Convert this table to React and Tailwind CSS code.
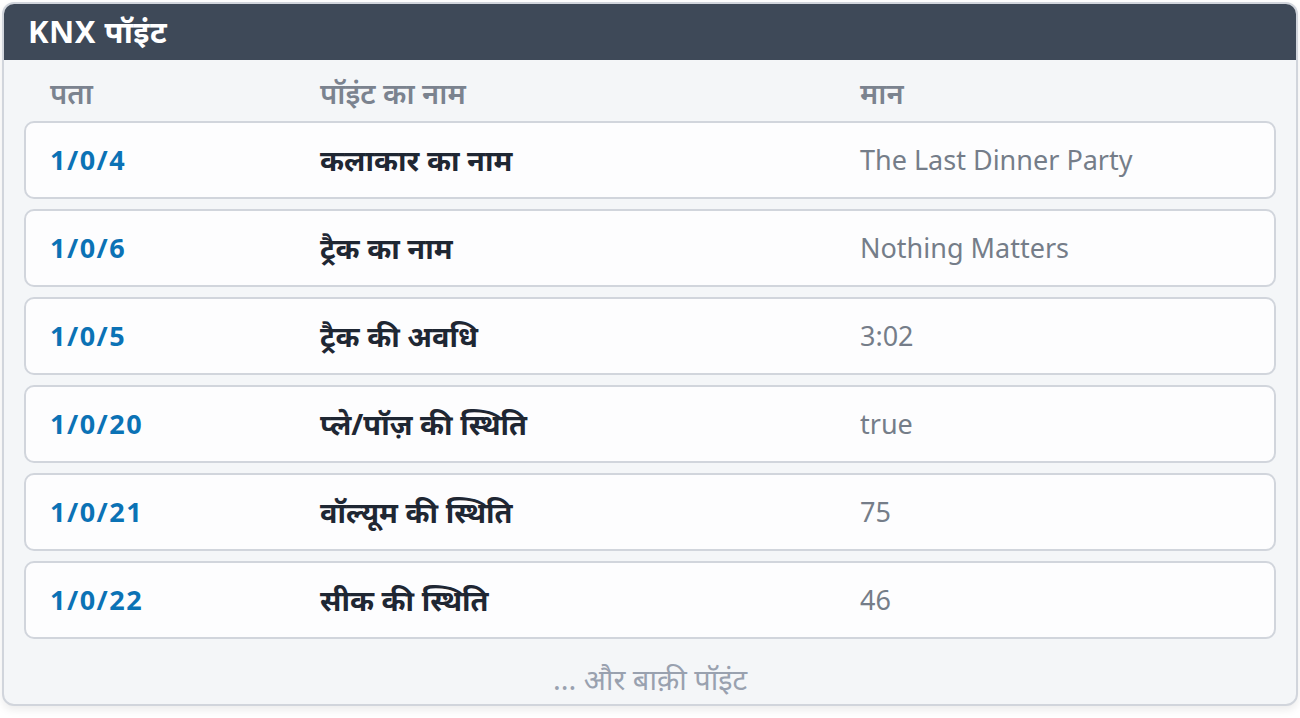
const points = [
  { addr: "1/0/4", name: "कलाकार का नाम", value: "The Last Dinner Party" },
  { addr: "1/0/6", name: "ट्रैक का नाम", value: "Nothing Matters" },
  { addr: "1/0/5", name: "ट्रैक की अवधि", value: "3:02" },
  { addr: "1/0/20", name: "प्ले/पॉज़ की स्थिति", value: "true" },
  { addr: "1/0/21", name: "वॉल्यूम की स्थिति", value: "75" },
  { addr: "1/0/22", name: "सीक की स्थिति", value: "46" },
];

export default function App() {
  return (
    <div
      className="w-[1300px] h-[718px] bg-white p-[2px]"
      style={{ fontFamily: '"Noto Sans", "Noto Sans Devanagari", sans-serif' }}
    >
      <div className="h-[704px] rounded-xl border-2 border-gray-300 bg-[#f4f6f8] overflow-hidden shadow-[0_4px_8px_rgba(0,0,0,0.08)]">
        {/* Header */}
        <div className="h-[56px] pb-[2px] bg-[#3e4958] flex items-center px-[24px]">
          <h1 className="text-[31px] font-bold text-white leading-none tracking-[0.5px]">KNX पॉइंट</h1>
        </div>

        {/* Column headings */}
        <div className="grid grid-cols-[270px_540px_1fr] px-[46px] h-[61px] pt-[4px] items-center text-[29px] font-semibold text-[#7b838f] leading-none">
          <span>पता</span>
          <span>पॉइंट का नाम</span>
          <span>मान</span>
        </div>

        {/* Rows */}
        <div className="flex flex-col gap-[10px] px-[20px]">
          {points.map((p) => (
            <div
              key={p.addr}
              className="grid grid-cols-[270px_540px_1fr] items-center h-[78px] px-[24px] bg-[#fdfdfe] border-2 border-gray-300 rounded-[10px]"
            >
              <span className="text-[27px] font-bold text-[#0b72b5] tracking-[1.5px]">{p.addr}</span>
              <span className="text-[29px] font-bold text-[#1f2733]">{p.name}</span>
              <span className="text-[27px] text-[#757d89]">{p.value}</span>
            </div>
          ))}
        </div>

        {/* Footer */}
        <div className="h-[65px] pt-[14px] flex items-center justify-center text-[29px] text-gray-400">
          ... और बाक़ी पॉइंट
        </div>
      </div>
    </div>
  );
}
